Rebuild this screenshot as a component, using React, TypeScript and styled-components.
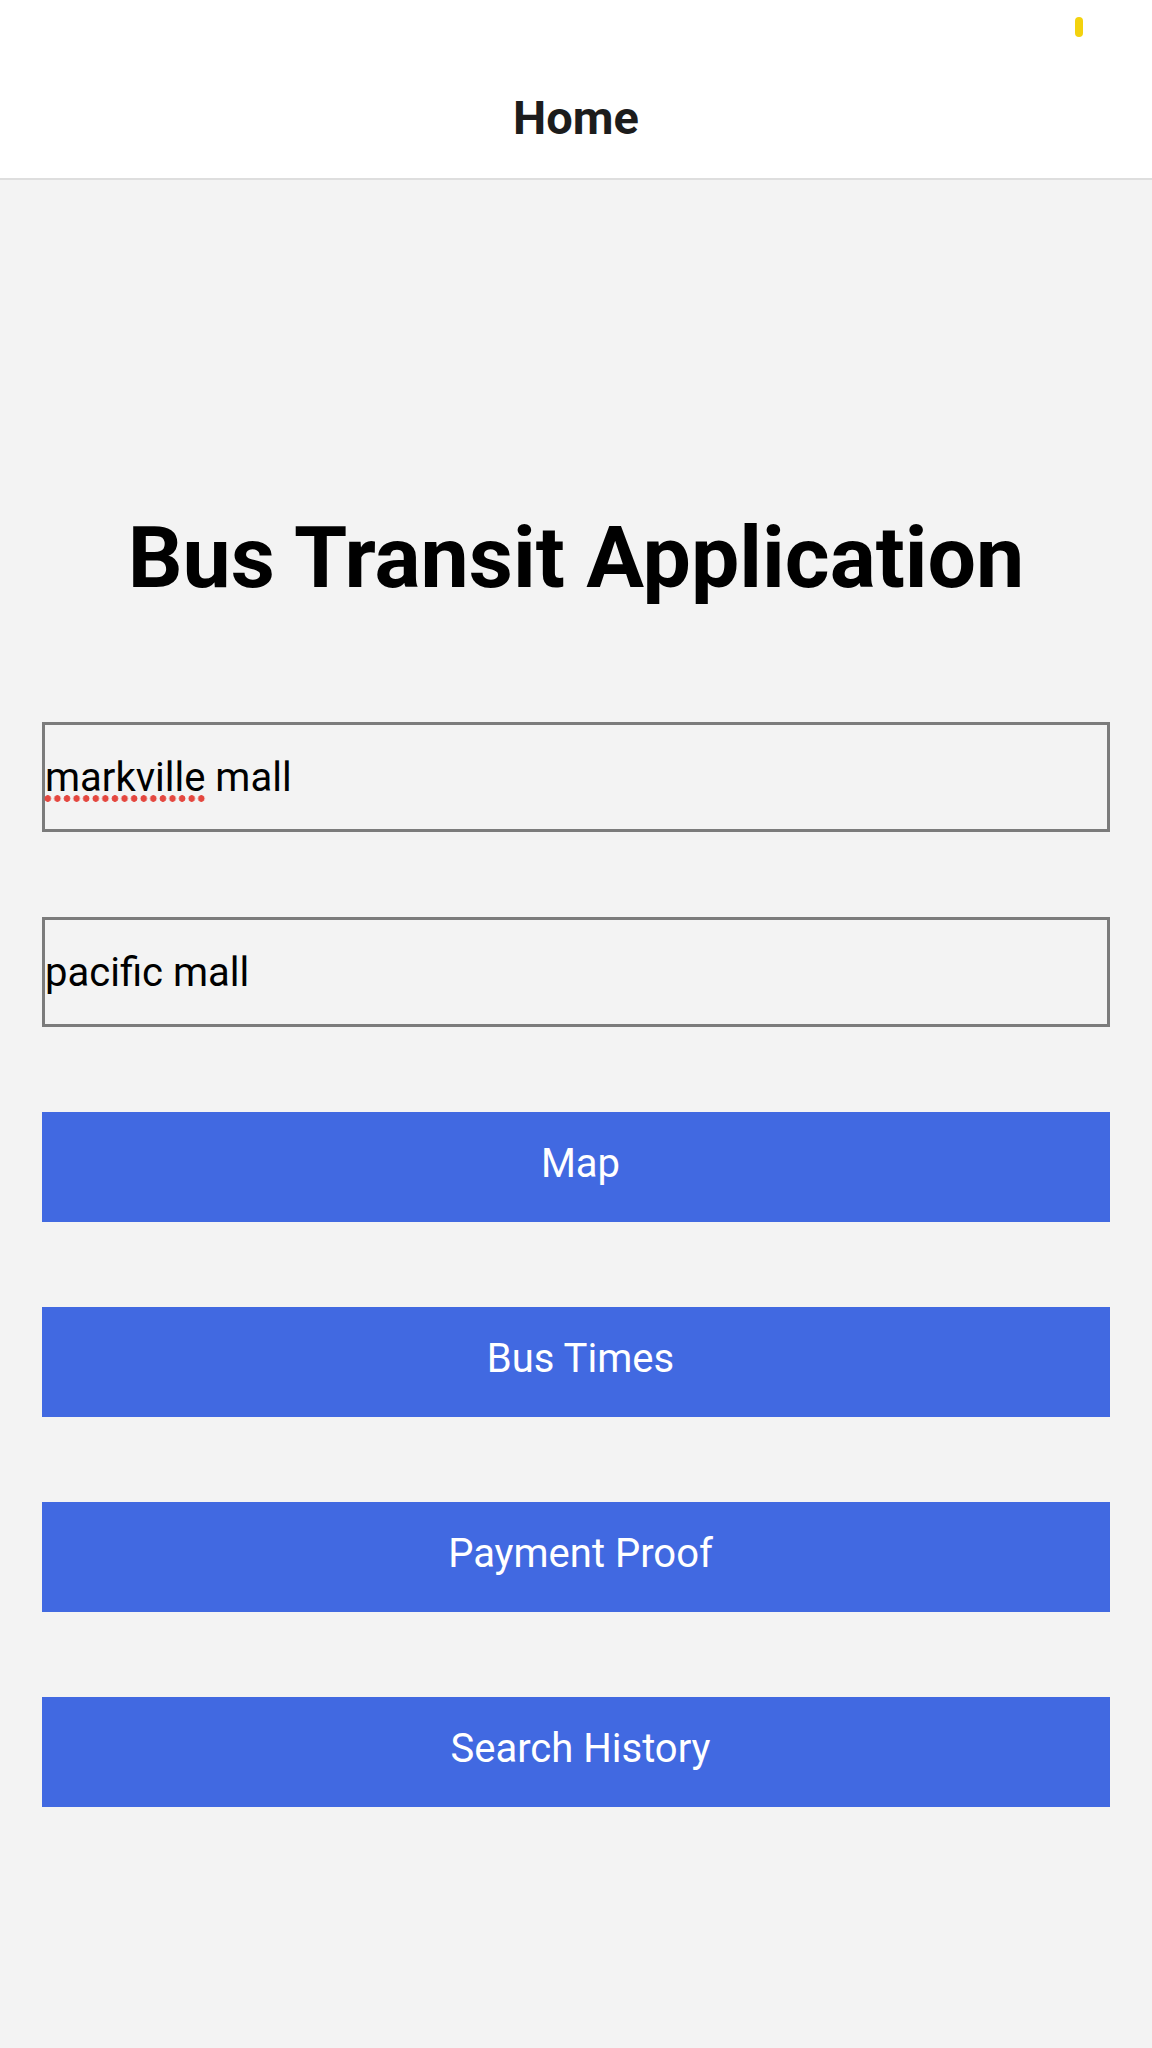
import React from "react";
import styled, { createGlobalStyle } from "styled-components";

const GlobalStyle = createGlobalStyle`
  html, body {
    margin: 0;
    padding: 0;
    background: #f3f3f3;
    font-family: Roboto, "Liberation Sans", Arial, sans-serif;
  }
  * { box-sizing: border-box; }
`;

const Screen = styled.div`
  display: flex;
  flex-direction: column;
  min-height: 2048px;
  background: #f3f3f3;
`;

const Header = styled.header`
  position: relative;
  height: 180px;
  padding-top: 94px;
  background: #ffffff;
  border-bottom: 2px solid #dedede;
  display: flex;
  justify-content: center;
`;

const HeaderTitle = styled.h1`
  margin: 0;
  font-family: Roboto, "Liberation Sans", sans-serif;
  font-size: 47px;
  line-height: 1;
  font-weight: 700;
  color: #1c1c1c;
`;

const StatusPill = styled.span`
  position: absolute;
  top: 17px;
  right: 69px;
  width: 8px;
  height: 20px;
  border-radius: 4px;
  background: #f3d20e;
`;

const Main = styled.main`
  display: flex;
  flex-direction: column;
  padding: 335px 42px 0;
`;

const AppTitle = styled.h2`
  margin: 0 0 121px;
  text-align: center;
  font-family: Roboto, "Liberation Sans", sans-serif;
  font-size: 86px;
  line-height: 1;
  font-weight: 700;
  color: #000000;
`;

const Stack = styled.div`
  display: flex;
  flex-direction: column;
  gap: 85px;
`;

const FieldWrap = styled.div`
  position: relative;
`;

const TextField = styled.input`
  display: block;
  width: 100%;
  height: 110px;
  margin: 0;
  padding: 0;
  border: 3px solid #7b7b7b;
  border-radius: 0;
  background: transparent;
  font-family: Roboto, "Liberation Sans", sans-serif;
  font-size: 40px;
  color: #000000;
  outline: none;
`;

const SpellMark = styled.span<{ $width: number }>`
  position: absolute;
  left: 1px;
  top: 73px;
  height: 7px;
  width: ${(p) => p.$width}px;
  background-image: radial-gradient(circle, #e4473f 3px, transparent 3.6px);
  background-size: 9.6px 7px;
  background-repeat: repeat-x;
  background-position: left center;
  pointer-events: none;
`;

const ActionButton = styled.button`
  display: flex;
  align-items: center;
  justify-content: center;
  width: 100%;
  height: 110px;
  margin: 0;
  padding: 0 0 8px 9px;
  border: none;
  border-radius: 0;
  background: #4169e1;
  color: #ffffff;
  font-family: Roboto, "Liberation Sans", sans-serif;
  font-size: 40px;
  font-weight: 400;
  cursor: pointer;
`;

const actions = ["Map", "Bus Times", "Payment Proof", "Search History"];

export default function App() {
  return (
    <>
      <GlobalStyle />
      <Screen>
        <Header>
          <HeaderTitle>Home</HeaderTitle>
          <StatusPill />
        </Header>
        <Main>
          <AppTitle>Bus Transit Application</AppTitle>
          <Stack>
            <FieldWrap>
              <TextField defaultValue="markville mall" spellCheck={false} />
              <SpellMark $width={164} />
            </FieldWrap>
            <FieldWrap>
              <TextField defaultValue="pacific mall" spellCheck={false} />
            </FieldWrap>
            {actions.map((label) => (
              <ActionButton key={label} type="button">
                {label}
              </ActionButton>
            ))}
          </Stack>
        </Main>
      </Screen>
    </>
  );
}
